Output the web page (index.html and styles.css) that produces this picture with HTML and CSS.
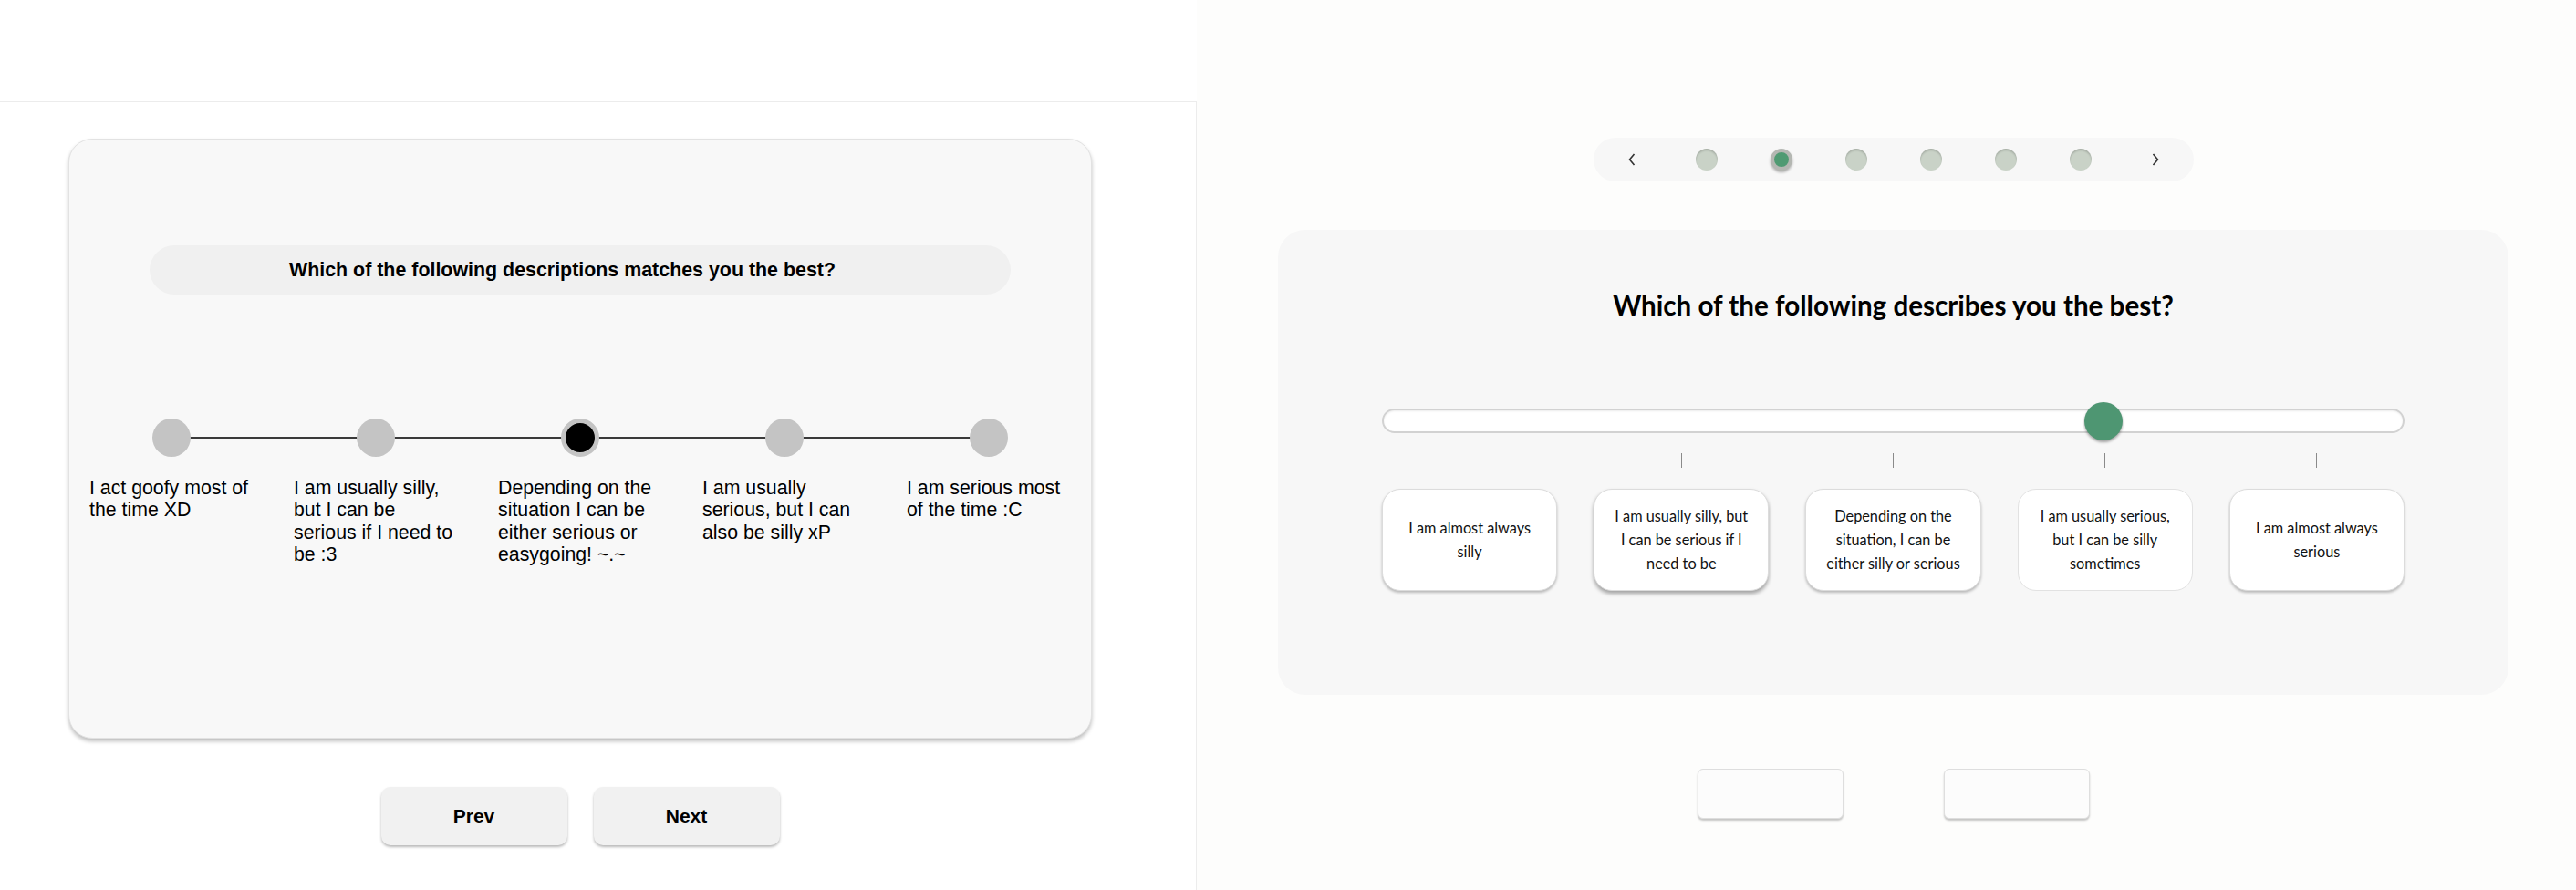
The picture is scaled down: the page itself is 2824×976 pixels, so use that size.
FILE: index.html
```html
<!DOCTYPE html>
<html lang="en">
<head>
<meta charset="utf-8">
<title>Personality slider</title>
<link rel="stylesheet" href="styles.css">
</head>
<body>
<div class="page">
  <section class="pane-left">
    <div class="quiz-card">
      <div class="question-pill">Which of the following descriptions matches you the best?</div>
      <div class="scale">
        <div class="option"><span class="dot"></span><p class="label">I act goofy most of the time XD</p></div>
        <div class="option"><span class="dot"></span><p class="label">I am usually silly, but I can be serious if I need to be :3</p></div>
        <div class="option"><span class="dot dot-active"></span><p class="label">Depending on the situation I can be either serious or easygoing! ~.~</p></div>
        <div class="option"><span class="dot"></span><p class="label">I am usually serious, but I can also be silly xP</p></div>
        <div class="option"><span class="dot"></span><p class="label">I am serious most of the time :C</p></div>
      </div>
    </div>
    <div class="nav-buttons">
      <button class="nav-btn">Prev</button>
      <button class="nav-btn">Next</button>
    </div>
  </section>

  <section class="pane-right">
    <nav class="pager">
      <span class="chev"><svg width="10" height="16" viewBox="0 0 10 16"><polyline points="7.5,2 2.5,8 7.5,14" fill="none" stroke="#333" stroke-width="1.6"/></svg></span>
      <span class="pdot"></span>
      <span class="pdot pdot-active"></span>
      <span class="pdot"></span>
      <span class="pdot"></span>
      <span class="pdot"></span>
      <span class="pdot"></span>
      <span class="chev"><svg width="10" height="16" viewBox="0 0 10 16"><polyline points="2.5,2 7.5,8 2.5,14" fill="none" stroke="#333" stroke-width="1.6"/></svg></span>
    </nav>

    <div class="slider-card">
      <h2 class="slider-title">Which of the following describes you the best?</h2>
      <div class="track"><span class="thumb"></span></div>
      <div class="choices">
        <div class="choice-col"><span class="tick"></span><div class="choice">I am almost always silly</div></div>
        <div class="choice-col"><span class="tick"></span><div class="choice choice-raised">I am usually silly, but I can be serious if I need to be</div></div>
        <div class="choice-col"><span class="tick"></span><div class="choice">Depending on the situation, I can be either silly or serious</div></div>
        <div class="choice-col"><span class="tick"></span><div class="choice choice-flat">I am usually serious, but I can be silly sometimes</div></div>
        <div class="choice-col"><span class="tick"></span><div class="choice">I am almost always serious</div></div>
      </div>
    </div>

    <div class="ghost-buttons">
      <button class="ghost-btn" aria-label="Previous"></button>
      <button class="ghost-btn" aria-label="Next"></button>
    </div>
  </section>
</div>
</body>
</html>
```

FILE: styles.css
```css
* { box-sizing: border-box; }

html, body {
  margin: 0;
  padding: 0;
  background: #ffffff;
}

.page {
  display: flex;
  width: 2824px;
  height: 976px;
  overflow: hidden;
}

/* ---------- left pane ---------- */
.pane-left {
  width: 1312px;
  margin-top: 111px;
  border-top: 1px solid #ececec;
  border-right: 1px solid #ececec;
  background: #ffffff;
  padding: 40px 0 0 75px;
  font-family: "Liberation Sans", Arial, sans-serif;
  color: #000;
}

.quiz-card {
  width: 1122px;
  height: 658px;
  background: #f8f8f8;
  border: 1px solid #e2e2e2;
  border-radius: 26px;
  box-shadow: 0 3px 4px rgba(0, 0, 0, 0.25);
  padding-top: 116px;
}

.question-pill {
  width: 944px;
  height: 54px;
  margin: 0 auto;
  padding-left: 153px;
  border-radius: 27px;
  background: #f0f0f0;
  display: flex;
  align-items: center;
  font-weight: bold;
  font-size: 21.4px;
}

.scale {
  position: relative;
  display: grid;
  grid-template-columns: repeat(5, 1fr);
  margin-top: 136px;
}

.scale::before {
  content: "";
  position: absolute;
  left: 10%;
  right: 10%;
  top: 20px;
  height: 2px;
  background: #3a3a3a;
}

.option {
  display: flex;
  flex-direction: column;
  align-items: center;
}

.dot {
  position: relative;
  width: 42px;
  height: 42px;
  border-radius: 50%;
  background: #c4c4c4;
}

.dot-active {
  background: #000;
  border: 5px solid #c4c4c4;
}

.label {
  width: 180px;
  margin: 22px 0 0;
  font-size: 21.3px;
  line-height: 24.3px;
}

.nav-buttons {
  width: 1122px;
  display: flex;
  justify-content: center;
  gap: 29px;
  margin-top: 53px;
}

.nav-btn {
  width: 204px;
  height: 64px;
  border: none;
  border-radius: 10px;
  background: #f1f1f1;
  box-shadow: 0 2px 3px rgba(0, 0, 0, 0.28);
  font-family: "Liberation Sans", Arial, sans-serif;
  font-weight: bold;
  font-size: 21px;
  color: #000;
}

/* ---------- right pane ---------- */
.pane-right {
  flex: 1;
  background: #fdfdfc;
  padding: 151px 74px 0 89px;
  display: flex;
  flex-direction: column;
  align-items: center;
  font-family: Lato, "Open Sans", sans-serif;
  color: #111;
}

.pager {
  display: flex;
  align-items: center;
  gap: 58px;
  height: 48px;
  padding: 0 30px;
  border-radius: 24px;
  background: #f7f7f7;
}

.chev {
  width: 24px;
  display: flex;
  justify-content: center;
}

.pdot {
  width: 24px;
  height: 24px;
  border-radius: 50%;
  background: #c9d2c7;
  box-shadow: inset 0 2px 2px rgba(0, 0, 0, 0.16);
}

.pdot-active {
  background: #4f9a72;
  border: 4px solid #b4b7b2;
  box-shadow: 0 2px 3px rgba(0, 0, 0, 0.3);
}

.slider-card {
  width: 1349px;
  height: 510px;
  margin-top: 53px;
  background: #f7f7f7;
  border-radius: 30px;
  padding: 65px 114px 0;
}

.slider-title {
  margin: 0;
  text-align: center;
  font-size: 29.6px;
  line-height: 36px;
  font-weight: bold;
  color: #000;
}

.track {
  position: relative;
  height: 27px;
  margin-top: 95px;
  background: #ffffff;
  border: 2px solid #d2d2d2;
  border-radius: 14px;
  box-shadow: inset 0 1px 2px rgba(0, 0, 0, 0.08);
}

.thumb {
  position: absolute;
  left: 70.6%;
  top: 50%;
  width: 42px;
  height: 42px;
  border-radius: 50%;
  background: #4e9672;
  transform: translate(-50%, -50%);
  box-shadow: 0 2px 3px rgba(0, 0, 0, 0.35);
}

.choices {
  display: grid;
  grid-template-columns: repeat(5, 1fr);
  column-gap: 40px;
  margin-top: 22px;
}

.choice-col {
  display: flex;
  flex-direction: column;
  align-items: center;
}

.tick {
  width: 1px;
  height: 16px;
  background: #8a8a8a;
}

.choice {
  width: 100%;
  height: 112px;
  margin-top: 23px;
  padding: 0 20px;
  background: #ffffff;
  border: 1px solid #dcdcdc;
  border-radius: 20px;
  box-shadow: 0 2px 3px rgba(0, 0, 0, 0.25);
  display: flex;
  align-items: center;
  justify-content: center;
  text-align: center;
  font-size: 16.3px;
  line-height: 26px;
  color: #111;
}

.choice-raised {
  box-shadow: 0 3px 4px rgba(0, 0, 0, 0.35);
}

.choice-flat {
  box-shadow: none;
  border-color: #e2e2e2;
}

.ghost-buttons {
  display: flex;
  gap: 110px;
  margin-top: 81px;
}

.ghost-btn {
  width: 160px;
  height: 55px;
  background: #fcfcfc;
  border: 1px solid #dedede;
  border-radius: 6px;
  box-shadow: 0 2px 2px rgba(0, 0, 0, 0.22);
}
```
